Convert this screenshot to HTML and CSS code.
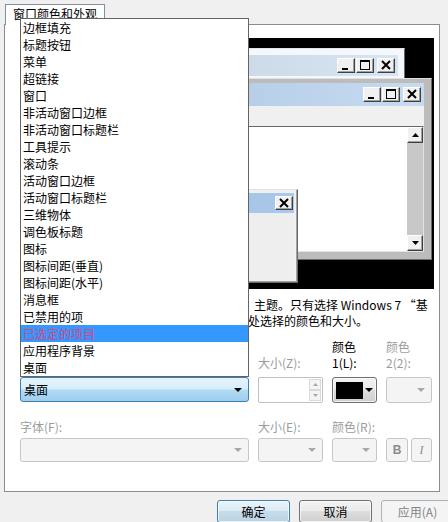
FILE: index.html
```html
<!DOCTYPE html>
<html lang="zh-CN">

<head>
    <meta charset="UTF-8">
    <title>窗口颜色和外观</title>
    <link rel="stylesheet" href="styles.css">
</head>

<body>

    <div class="tabs">
        <div class="tab">窗口颜色和外观</div>
    </div>

    <div class="panel">
        <!-- 预览区（左侧被下拉列表盖住） -->
        <div class="preview">
            <div class="win inactive">
                <div class="titlebar">
                    <span class="caption"></span>
                    <div class="cap-btns">
                        <span class="cap-btn"><svg width="16" height="13" viewBox="0 0 16 13"><rect x="4" y="9" width="6" height="2" /></svg></span>
                        <span class="cap-btn"><svg width="16" height="13" viewBox="0 0 16 13"><path d="M3 1h10v10H3z M4 3v7h8V3z" fill-rule="evenodd" /></svg></span>
                        <span class="cap-btn close"><svg width="16" height="13" viewBox="0 0 16 13"><path d="M4 2l8 8M12 2l-8 8" stroke="#000" stroke-width="2" /></svg></span>
                    </div>
                </div>
            </div>

            <div class="win active">
                <div class="titlebar">
                    <span class="caption"></span>
                    <div class="cap-btns">
                        <span class="cap-btn"><svg width="16" height="13" viewBox="0 0 16 13"><rect x="4" y="9" width="6" height="2" /></svg></span>
                        <span class="cap-btn"><svg width="16" height="13" viewBox="0 0 16 13"><path d="M3 1h10v10H3z M4 3v7h8V3z" fill-rule="evenodd" /></svg></span>
                        <span class="cap-btn close"><svg width="16" height="13" viewBox="0 0 16 13"><path d="M4 2l8 8M12 2l-8 8" stroke="#000" stroke-width="2" /></svg></span>
                    </div>
                </div>
                <div class="menubar"></div>
                <div class="client">
                    <div class="client-text"></div>
                    <div class="scrollbar">
                        <span class="sb-btn"><svg width="7" height="4" viewBox="0 0 7 4"><path d="M3.5 0L7 4H0z" /></svg></span>
                        <span class="sb-track"></span>
                        <span class="sb-btn"><svg width="7" height="4" viewBox="0 0 7 4"><path d="M0 0h7L3.5 4z" /></svg></span>
                    </div>
                </div>
            </div>

            <div class="msgbox">
                <div class="titlebar">
                    <span class="caption"></span>
                    <div class="cap-btns">
                        <span class="cap-btn close"><svg width="16" height="12" viewBox="0 0 16 12"><path d="M4 2l8 8M12 2l-8 8" stroke="#000" stroke-width="2" /></svg></span>
                    </div>
                </div>
                <div class="msg-body"></div>
            </div>
        </div>

        <div class="desc">
            <div class="line"><span class="lead"></span>主题。只有选择 Windows 7 “基</div>
            <div class="line"><span class="lead"></span>处选择的颜色和大小。</div>
        </div>

        <!-- 项目 / 字体 设置 -->
        <div class="fields">
            <div class="label bottom"></div>
            <div class="label bottom off">大小(Z):</div>
            <div class="label">颜色<br>1(L):</div>
            <div class="label off">颜色<br>2(2):</div>

            <div class="combo focus"><span>桌面</span><i class="arrow"></i></div>
            <div class="spin">
                <span class="spin-box"></span>
                <span class="spin-btns">
                    <span class="spin-btn"><svg width="5" height="3" viewBox="0 0 5 3"><path d="M2.5 0L5 3H0z" /></svg></span>
                    <span class="spin-btn"><svg width="5" height="3" viewBox="0 0 5 3"><path d="M0 0h5L2.5 3z" /></svg></span>
                </span>
            </div>
            <div class="colorbtn"><span class="swatch"></span><i class="arrow"></i></div>
            <div class="combo off"><i class="arrow"></i></div>

            <div class="label bottom off">字体(F):</div>
            <div class="label bottom off">大小(E):</div>
            <div class="label bottom off">颜色(R):</div>
            <div></div>

            <div class="combo off low"><i class="arrow"></i></div>
            <div class="combo off low"><i class="arrow"></i></div>
            <div class="combo off low"><i class="arrow"></i></div>
            <div class="style-btns low">
                <span class="style-btn bold">B</span>
                <span class="style-btn italic">I</span>
            </div>
        </div>
    </div>

    <div class="footer">
        <button class="btn default">确定</button>
        <button class="btn">取消</button>
        <button class="btn disabled">应用(A)</button>
    </div>

    <!-- 展开的项目下拉列表 -->
    <ul class="droplist">
        <li>边框填充</li>
        <li>标题按钮</li>
        <li>菜单</li>
        <li>超链接</li>
        <li>窗口</li>
        <li>非活动窗口边框</li>
        <li>非活动窗口标题栏</li>
        <li>工具提示</li>
        <li>滚动条</li>
        <li>活动窗口边框</li>
        <li>活动窗口标题栏</li>
        <li>三维物体</li>
        <li>调色板标题</li>
        <li>图标</li>
        <li>图标间距(垂直)</li>
        <li>图标间距(水平)</li>
        <li>消息框</li>
        <li>已禁用的项</li>
        <li class="selected">已选定的项目</li>
        <li>应用程序背景</li>
        <li>桌面</li>
    </ul>

</body>

</html>
```

FILE: styles.css
```css
* {
    margin: 0;
    padding: 0;
    box-sizing: border-box;
}

html,
body {
    width: 448px;
    height: 522px;
    overflow: hidden;
}

body {
    position: relative;
    background: #f0f0f0;
    font-family: "Noto Sans CJK SC", sans-serif;
    font-size: 12px;
    color: #000;
}

/* 选项卡 */

.tabs {
    display: flex;
    height: 24px;
    padding: 4px 0 0 5px;
}

.tab {
    position: relative;
    z-index: 1;
    height: 21px;
    padding: 0 7px;
    background: #fff;
    border: 1px solid #898c95;
    border-bottom: none;
    line-height: 18px;
}

.panel {
    width: 436px;
    height: 468px;
    margin-left: 4px;
    padding: 13px 0 0 15px;
    background: #fff;
    border: 1px solid #898c95;
}

/* 预览 */

.preview {
    position: relative;
    width: 414px;
    height: 251px;
    background: #000;
    overflow: hidden;
}

.win,
.msgbox {
    position: absolute;
    display: flex;
    flex-direction: column;
}

.titlebar {
    display: flex;
    align-items: center;
    justify-content: space-between;
    padding: 0 3px 0 4px;
}

.cap-btns {
    display: flex;
    gap: 1px;
}

.cap-btn {
    display: flex;
    align-items: center;
    justify-content: center;
    width: 18px;
    height: 15px;
    background: #f0f0f0;
    border: 1px solid;
    border-color: #fff #404040 #404040 #fff;
    box-shadow: inset -1px -1px 0 #a0a0a0;
}

.cap-btn.close {
    margin-left: 2px;
}

.inactive {
    left: 8px;
    top: 10px;
    width: 377px;
    height: 160px;
    padding: 6px;
    background: #f4f7fc;
    border: 1px solid;
    border-color: #e3e3e3 #696969 #696969 #e3e3e3;
}

.inactive .titlebar {
    height: 21px;
    background: linear-gradient(to right, #bfcddb, #d7e4f2);
}

.active {
    left: 16px;
    top: 40px;
    width: 396px;
    height: 182px;
    padding: 4px 7px 7px 4px;
    background: #bcbcbc;
    border: 1px solid;
    border-color: #e0e0e0 #6a6a6a #6a6a6a #e0e0e0;
}

.active .titlebar {
    height: 23px;
    background: linear-gradient(to right, #99b4d1, #b9d1ea 60%, #c7dbf0);
}

.menubar {
    height: 20px;
    background: #f0f0f0;
}

.client {
    flex: 1;
    display: flex;
    background: #fff;
    border: 1px solid;
    border-color: #696969 #e3e3e3 #e3e3e3 #696969;
}

.client-text {
    flex: 1;
}

.scrollbar {
    display: flex;
    flex-direction: column;
    width: 16px;
    background: #c8c8c8;
}

.sb-btn {
    display: flex;
    align-items: center;
    justify-content: center;
    height: 16px;
    background: #f0f0f0;
    border: 1px solid;
    border-color: #fff #404040 #404040 #fff;
    box-shadow: inset -1px -1px 0 #a0a0a0;
}

.sb-track {
    flex: 1;
}

.msgbox {
    left: 24px;
    top: 151px;
    width: 254px;
    height: 94px;
    padding: 3px;
    background: #f0f0f0;
    border: 1px solid;
    border-color: #e0e0e0 #6a6a6a #6a6a6a #e0e0e0;
    box-shadow: inset -1px -1px 0 #a0a0a0;
}

.msgbox .titlebar {
    height: 20px;
    padding-right: 1px;
    background: linear-gradient(to right, #99b4d1, #a9c9ec);
}

.msgbox .cap-btn {
    height: 14px;
}

.msg-body {
    flex: 1;
    background: #eeeeee;
}

/* 说明文字 */

.desc {
    margin-top: 8px;
    line-height: 16px;
}

.desc .line {
    white-space: nowrap;
}

.desc .lead {
    display: inline-block;
    width: 234px;
}

.desc .line + .line .lead {
    width: 228px;
}

/* 设置表格 */

.fields {
    display: grid;
    grid-template-columns: 229px 65px 45px 46px;
    grid-template-rows: 38px 26px 32px 27px;
    column-gap: 9px;
    margin-top: 10px;
    line-height: 16px;
}

.label {
    white-space: nowrap;
}

.label.bottom {
    align-self: end;
    margin-bottom: 6px;
}

.fields .label.bottom:nth-child(n+9) {
    margin-bottom: 0;
}

.label.off {
    color: #9c9c9c;
}

.arrow {
    position: absolute;
    right: 6px;
    top: 50%;
    margin-top: -2px;
    border-left: 4px solid transparent;
    border-right: 4px solid transparent;
    border-top: 4px solid #000;
}

.combo {
    position: relative;
    height: 25px;
    border-radius: 3px;
}

.combo.focus {
    padding-left: 3px;
    line-height: 23px;
    border: 1px solid #3c7fb1;
    background: linear-gradient(#e5f4fc 0%, #d6eefb 48%, #b1dbf4 52%, #9fcdef 100%);
}

.combo.off {
    height: 26px;
    border: 1px solid #c6c6c6;
    background: #f4f4f4;
}

.combo.off .arrow {
    border-top-color: #a8a8a8;
}

.low {
    align-self: end;
    height: 24px !important;
}

.spin {
    display: flex;
    height: 26px;
    border: 1px solid #c0c0c0;
    border-radius: 2px;
    background: #fff;
}

.spin-box {
    flex: 1;
}

.spin-btns {
    display: flex;
    flex-direction: column;
    width: 14px;
    padding: 1px;
}

.spin-btn {
    flex: 1;
    display: flex;
    align-items: center;
    justify-content: center;
    border: 1px solid #dadada;
    background: #f4f4f4;
    fill: #a8a8a8;
}

.colorbtn {
    position: relative;
    height: 26px;
    border: 1px solid #707070;
    border-radius: 3px;
    background: linear-gradient(#f2f2f2 0%, #ebebeb 45%, #dddddd 50%, #cfcfcf 100%);
    box-shadow: inset 0 0 0 1px rgba(255, 255, 255, 0.7);
}

.swatch {
    position: absolute;
    left: 3px;
    top: 4px;
    width: 27px;
    height: 17px;
    background: #000;
}

.colorbtn .arrow {
    right: 3px;
}

.style-btns {
    display: flex;
    gap: 3px;
}

.style-btn {
    width: 22px;
    display: flex;
    align-items: center;
    justify-content: center;
    border: 1px solid #c6c6c6;
    border-radius: 3px;
    background: #f4f4f4;
    color: #8c8c8c;
}

.style-btn.bold {
    font-family: "Liberation Sans", sans-serif;
    font-weight: bold;
}

.style-btn.italic {
    width: 21px;
    font-family: "Liberation Serif", serif;
    font-style: italic;
}

/* 底部按钮 */

.footer {
    display: flex;
    gap: 9px;
    padding: 8px 0 0 217px;
}

.btn {
    flex-shrink: 0;
    width: 73px;
    height: 23px;
    font-family: "Noto Sans CJK SC", sans-serif;
    font-size: 12px;
    color: #000;
    border: 1px solid #707070;
    border-radius: 3px;
    background: linear-gradient(#f2f2f2 0%, #ebebeb 45%, #dddddd 50%, #cfcfcf 100%);
    box-shadow: inset 0 0 0 1px rgba(255, 255, 255, 0.7);
}

.btn.default {
    border-color: #3c7fb1;
    background: linear-gradient(#eaf4fa 0%, #dcebf5 45%, #c8dcea 50%, #b9d3e6 100%);
}

.btn.disabled {
    color: #838383;
    border-color: #adb2b5;
    background: #f4f4f4;
    box-shadow: none;
}

/* 下拉列表 */

.droplist {
    position: absolute;
    z-index: 10;
    left: 20px;
    top: 18px;
    width: 229px;
    list-style: none;
    background: #fff;
    border: 1px solid #646464;
}

.droplist li {
    height: 17px;
    padding-left: 2px;
    line-height: 17px;
    white-space: nowrap;
}

.droplist li.selected {
    background: #3399ff;
    color: #d9457f;
}
```
